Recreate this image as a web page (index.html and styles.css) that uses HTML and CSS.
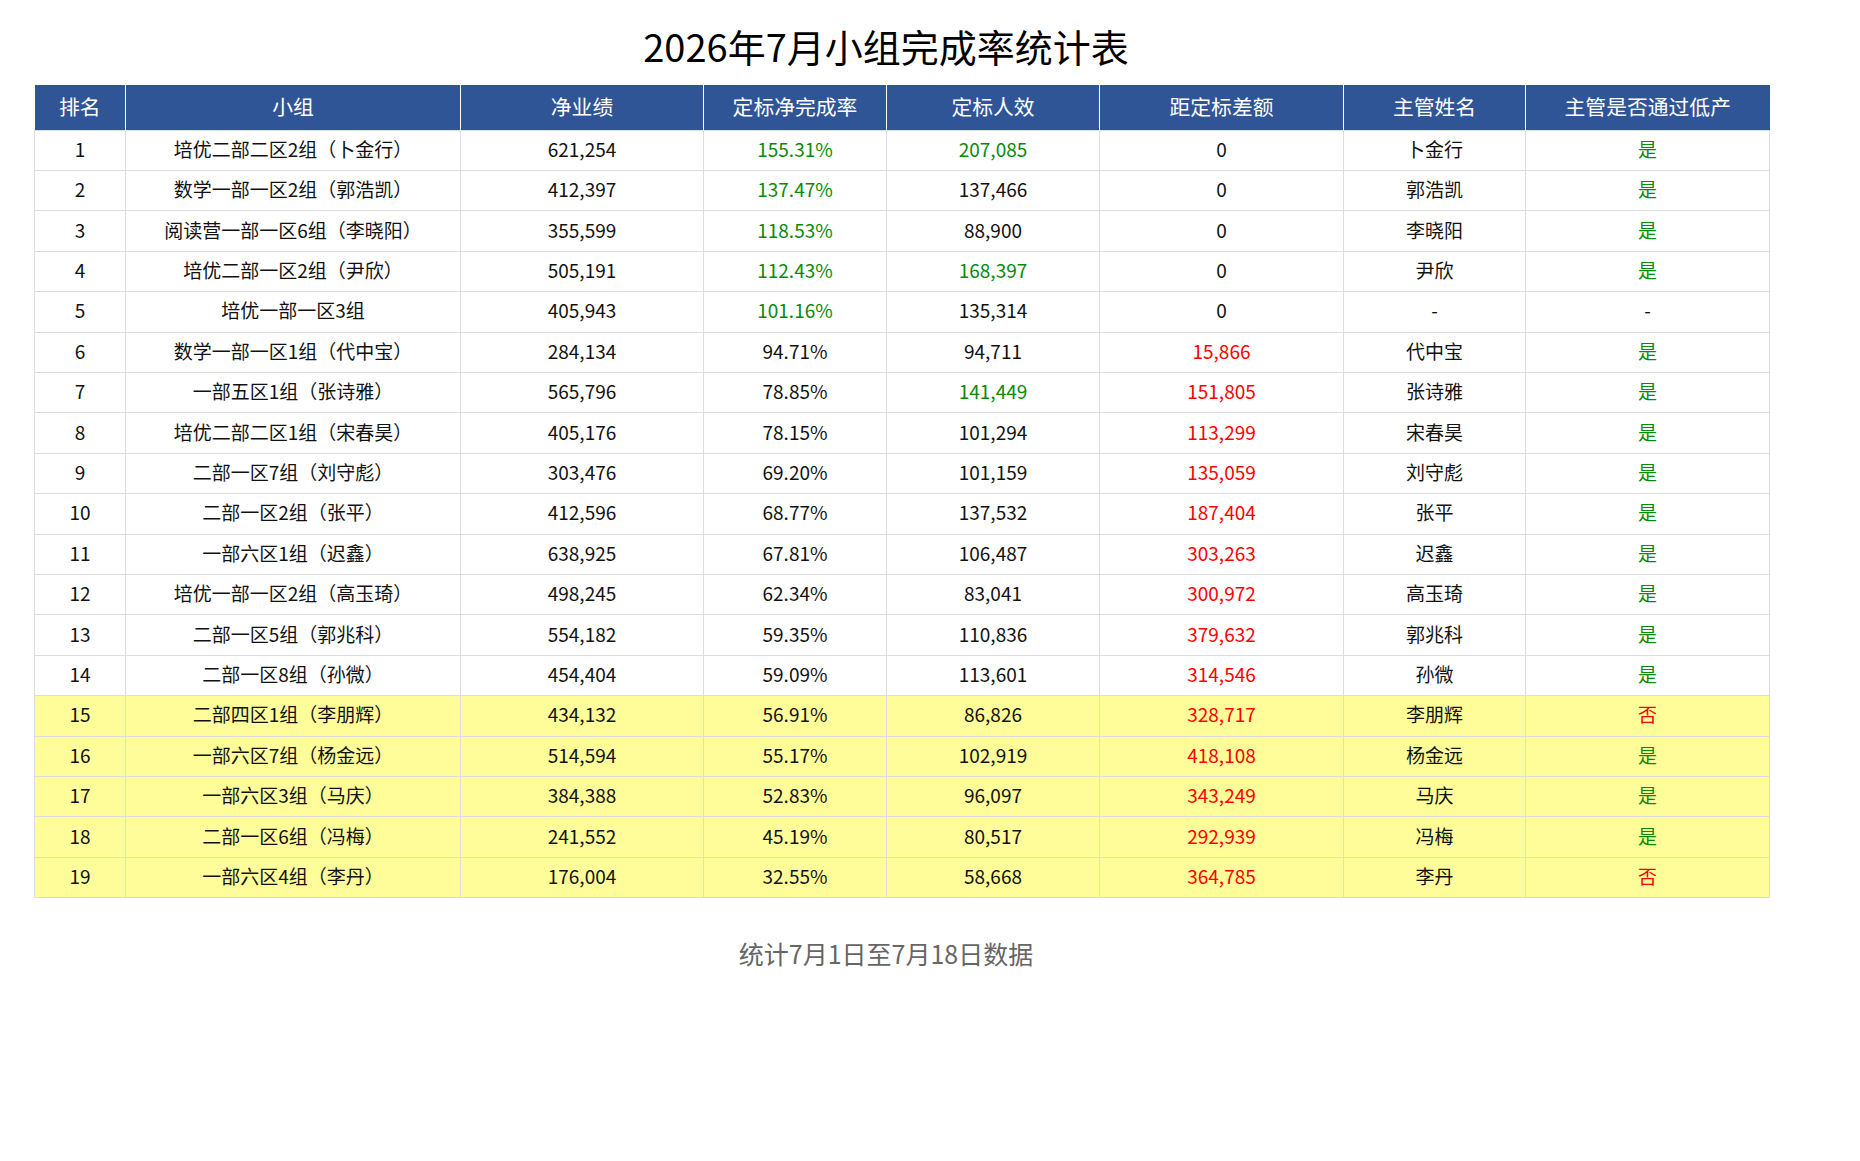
FILE: index.html
```html
<!DOCTYPE html>
<html lang="zh-CN">
<head>
<meta charset="utf-8">
<title>2026年7月小组完成率统计表</title>
<link rel="stylesheet" href="styles.css">
</head>
<body>
<div class="page">
  <h1 class="title">2026年7月小组完成率统计表</h1>
  <table class="stats">
    <colgroup>
      <col class="c-rank"><col class="c-group"><col class="c-perf"><col class="c-rate"><col class="c-eff"><col class="c-gap"><col class="c-name"><col class="c-pass">
    </colgroup>
    <thead>
      <tr><th>排名</th><th>小组</th><th>净业绩</th><th>定标净完成率</th><th>定标人效</th><th>距定标差额</th><th>主管姓名</th><th>主管是否通过低产</th></tr>
    </thead>
    <tbody>
      <tr><td>1</td><td>培优二部二区2组（卜金行）</td><td>621,254</td><td class="g">155.31%</td><td class="g">207,085</td><td>0</td><td>卜金行</td><td class="g">是</td></tr>
      <tr><td>2</td><td>数学一部一区2组（郭浩凯）</td><td>412,397</td><td class="g">137.47%</td><td>137,466</td><td>0</td><td>郭浩凯</td><td class="g">是</td></tr>
      <tr><td>3</td><td>阅读营一部一区6组（李晓阳）</td><td>355,599</td><td class="g">118.53%</td><td>88,900</td><td>0</td><td>李晓阳</td><td class="g">是</td></tr>
      <tr><td>4</td><td>培优二部一区2组（尹欣）</td><td>505,191</td><td class="g">112.43%</td><td class="g">168,397</td><td>0</td><td>尹欣</td><td class="g">是</td></tr>
      <tr><td>5</td><td>培优一部一区3组</td><td>405,943</td><td class="g">101.16%</td><td>135,314</td><td>0</td><td>-</td><td>-</td></tr>
      <tr><td>6</td><td>数学一部一区1组（代中宝）</td><td>284,134</td><td>94.71%</td><td>94,711</td><td class="r">15,866</td><td>代中宝</td><td class="g">是</td></tr>
      <tr><td>7</td><td>一部五区1组（张诗雅）</td><td>565,796</td><td>78.85%</td><td class="g">141,449</td><td class="r">151,805</td><td>张诗雅</td><td class="g">是</td></tr>
      <tr><td>8</td><td>培优二部二区1组（宋春昊）</td><td>405,176</td><td>78.15%</td><td>101,294</td><td class="r">113,299</td><td>宋春昊</td><td class="g">是</td></tr>
      <tr><td>9</td><td>二部一区7组（刘守彪）</td><td>303,476</td><td>69.20%</td><td>101,159</td><td class="r">135,059</td><td>刘守彪</td><td class="g">是</td></tr>
      <tr><td>10</td><td>二部一区2组（张平）</td><td>412,596</td><td>68.77%</td><td>137,532</td><td class="r">187,404</td><td>张平</td><td class="g">是</td></tr>
      <tr><td>11</td><td>一部六区1组（迟鑫）</td><td>638,925</td><td>67.81%</td><td>106,487</td><td class="r">303,263</td><td>迟鑫</td><td class="g">是</td></tr>
      <tr><td>12</td><td>培优一部一区2组（高玉琦）</td><td>498,245</td><td>62.34%</td><td>83,041</td><td class="r">300,972</td><td>高玉琦</td><td class="g">是</td></tr>
      <tr><td>13</td><td>二部一区5组（郭兆科）</td><td>554,182</td><td>59.35%</td><td>110,836</td><td class="r">379,632</td><td>郭兆科</td><td class="g">是</td></tr>
      <tr><td>14</td><td>二部一区8组（孙微）</td><td>454,404</td><td>59.09%</td><td>113,601</td><td class="r">314,546</td><td>孙微</td><td class="g">是</td></tr>
      <tr class="low"><td>15</td><td>二部四区1组（李朋辉）</td><td>434,132</td><td>56.91%</td><td>86,826</td><td class="r">328,717</td><td>李朋辉</td><td class="r">否</td></tr>
      <tr class="low"><td>16</td><td>一部六区7组（杨金远）</td><td>514,594</td><td>55.17%</td><td>102,919</td><td class="r">418,108</td><td>杨金远</td><td class="g">是</td></tr>
      <tr class="low"><td>17</td><td>一部六区3组（马庆）</td><td>384,388</td><td>52.83%</td><td>96,097</td><td class="r">343,249</td><td>马庆</td><td class="g">是</td></tr>
      <tr class="low"><td>18</td><td>二部一区6组（冯梅）</td><td>241,552</td><td>45.19%</td><td>80,517</td><td class="r">292,939</td><td>冯梅</td><td class="g">是</td></tr>
      <tr class="low"><td>19</td><td>一部六区4组（李丹）</td><td>176,004</td><td>32.55%</td><td>58,668</td><td class="r">364,785</td><td>李丹</td><td class="r">否</td></tr>
    </tbody>
  </table>
  <p class="note">统计7月1日至7月18日数据</p>
</div>
</body>
</html>
```

FILE: styles.css
```css
html, body {
  margin: 0;
  padding: 0;
  background: #ffffff;
}

body {
  font-family: "Noto Sans CJK SC", "Noto Sans", sans-serif;
  color: #111111;
}

.page {
  width: 1772px;
}

.title {
  margin: 0 0 14px 0;
  padding-top: 21px;
  line-height: 50px;
  font-size: 38px;
  font-weight: normal;
  text-align: center;
  color: #000000;
}

.stats {
  margin-left: 34px;
  width: 1735px;
  table-layout: fixed;
  border-collapse: collapse;
}

.c-rank { width: 91px; }
.c-group { width: 335px; }
.c-perf { width: 243px; }
.c-rate { width: 183px; }
.c-eff { width: 213px; }
.c-gap { width: 244px; }
.c-name { width: 182px; }
.c-pass { width: 244px; }

.stats thead tr {
  height: 45px;
}

.stats th {
  padding: 0 0 3px 0;
  background: #2f5597;
  color: #ffffff;
  font-size: 20.8px;
  font-weight: normal;
  text-align: center;
  border-left: 1px solid #ffffff;
  border-right: 1px solid #ffffff;
}

.stats th:first-child { border-left: none; }
.stats th:last-child { border-right: none; }

.stats tbody tr {
  height: 40.42px;
}

.stats td {
  padding: 0 0 4px 0;
  font-size: 19px;
  text-align: center;
  border: 1px solid #dddddd;
  color: #111111;
}

.stats tr.low td {
  background: #fffd99;
}

.stats td.g { color: #088a08; }
.stats td.r { color: #ff0000; }

.note {
  margin: 40px 0 0 0;
  line-height: 30px;
  font-size: 25px;
  text-align: center;
  color: #666666;
}
```
